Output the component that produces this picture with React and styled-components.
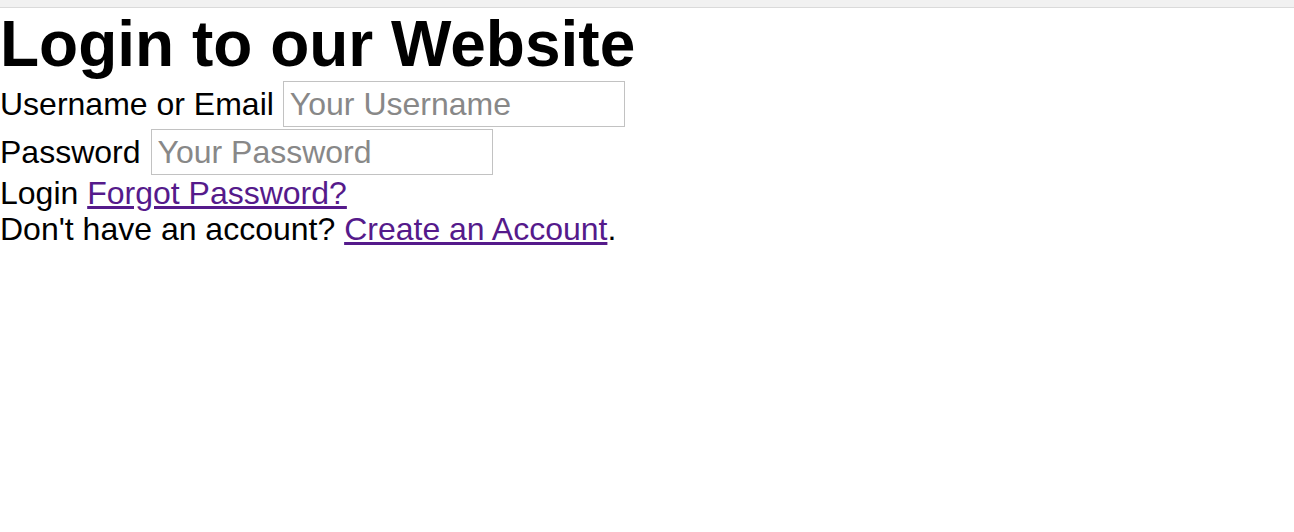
import styled, { createGlobalStyle } from 'styled-components';

const GlobalStyle = createGlobalStyle`
  body {
    margin: 0;
    font-family: "Liberation Sans", Arial, Helvetica, sans-serif;
    font-size: 32px;
    color: #000;
    background: #fff;
  }
`;

const TopBar = styled.div`
  height: 7px;
  background-color: #f1f1f1;
  border-bottom: 1px solid #dadada;
`;

const Title = styled.h1`
  margin: 0;
  font-size: 64px;
  font-weight: bold;
  line-height: 73px;
`;

const Fields = styled.div`
  display: flex;
  flex-direction: column;
  gap: 2px;
`;

const Field = styled.div`
  display: flex;
  align-items: baseline;
  gap: ${(p) => p.$gap || 9}px;
`;

const Label = styled.label`
  line-height: 36px;
`;

const Input = styled.input`
  box-sizing: border-box;
  width: 342px;
  height: 46px;
  margin: 0;
  padding: 0 6px;
  border: 1px solid #c2c2c2;
  border-radius: 0;
  font: inherit;
  color: #000;
  outline: none;

  &::placeholder {
    color: #888;
    opacity: 1;
  }
`;

const Line = styled.div`
  line-height: 36px;
`;

const Link = styled.a`
  color: #551a8b;
  text-decoration: underline;
  cursor: pointer;
`;

const App = () => {
  return (
    <>
      <GlobalStyle />
      <TopBar />
      <Title>Login to our Website</Title>
      <Fields>
        <Field>
          <Label htmlFor="user">Username or Email</Label>
          <Input id="user" type="text" placeholder="Your Username" />
        </Field>
        <Field $gap={10}>
          <Label htmlFor="pass">Password</Label>
          <Input id="pass" type="password" placeholder="Your Password" />
        </Field>
      </Fields>
      <Line>
        Login <Link href="#">Forgot Password?</Link>
      </Line>
      <Line>
        Don't have an account? <Link href="#">Create an Account</Link>.
      </Line>
    </>
  );
};

export default App;
